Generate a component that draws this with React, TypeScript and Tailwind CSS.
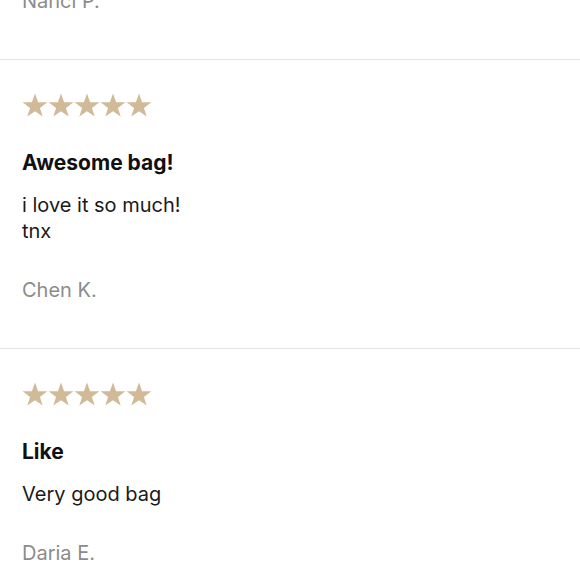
const reviews = [
  { title: 'Awesome bag!', body: ['i love it so much!', 'tnx'], name: 'Chen K.' },
  { title: 'Like', body: ['Very good bag'], name: 'Daria E.' },
]

function Star() {
  return (
    <svg width="26" height="24" viewBox="0 0 26 24">
      <path
        d="M13 0.5 L16.1 9.3 L25.4 9.3 L17.9 14.9 L20.7 23.6 L13 18.3 L5.3 23.6 L8.1 14.9 L0.6 9.3 L9.9 9.3 Z"
        fill="#d0ba97"
      />
    </svg>
  )
}

export default function ReviewsPage() {
  return (
    <div className="w-[580px] h-[580px] overflow-hidden bg-white font-['Inter',sans-serif] text-[20px] leading-[26px]">
      <div className="-mt-[12px] px-[22px] pb-[45px] text-[#8c8c8c]">Nanci P.</div>
      {reviews.map((r) => (
        <div key={r.name} className="border-t border-[#e2e2e2] px-[22px] pt-[33px] pb-[45px]">
          <div className="flex">
            {[0, 1, 2, 3, 4].map((i) => (
              <Star key={i} />
            ))}
          </div>
          <div className="mt-[33px] text-[21px] font-bold text-[#111]">{r.title}</div>
          <div className="mt-[16px] text-[#1a1a1a]">
            {r.body.map((line) => (
              <div key={line}>{line}</div>
            ))}
          </div>
          <div className="mt-[33px] text-[#8c8c8c]">{r.name}</div>
        </div>
      ))}
    </div>
  )
}
